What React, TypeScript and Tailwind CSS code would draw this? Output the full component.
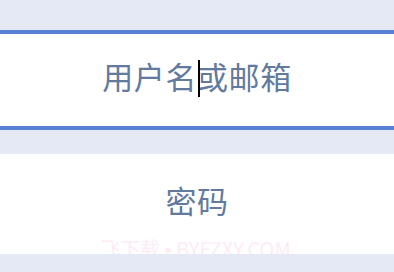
import React from "react";

export default function App() {
  return (
    <div
      className="w-[394px] h-[272px] bg-[#e4e9f5] pt-[30px] flex flex-col overflow-hidden"
      style={{ fontFamily: '"Noto Sans CJK SC", "Noto Sans", sans-serif' }}
    >
      <div className="h-[100px] bg-white border-y-4 border-[#5a80d4] flex items-center justify-center pb-[10px]">
        <span className="text-[31px] leading-none tracking-[0.6px] text-[#627a9e] whitespace-nowrap">
          用户名
          <span className="relative inline-block w-0 h-0">
            <span className="absolute left-[1px] top-[-29px] w-[2px] h-[37px] bg-black" />
          </span>
          或邮箱
        </span>
      </div>
      <div className="mt-[24px] h-[100px] bg-white relative overflow-hidden flex items-center justify-center pb-[10px]">
        <span className="text-[31px] leading-none tracking-[0.6px] text-[#627a9e]">密码</span>
        <span
          className="absolute left-[100px] top-[85px] text-[20px] leading-none text-[#fdebf7] whitespace-nowrap"
          style={{ fontFamily: '"Noto Sans CJK SC", sans-serif' }}
        >
          飞下载 <span style={{ fontFamily: '"Liberation Sans", sans-serif' }}>•</span> BYFZXY.COM
        </span>
      </div>
    </div>
  );
}
